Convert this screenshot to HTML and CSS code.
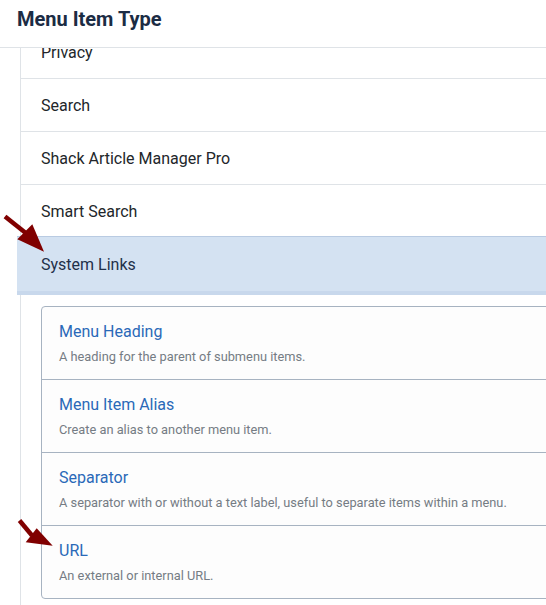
FILE: index.html
```html
<!DOCTYPE html>
<html lang="en">
<head>
<meta charset="utf-8">
<title>Menu Item Type</title>
<link rel="stylesheet" href="styles.css">
</head>
<body>
<div class="page">
  <header class="modal-header">
    <h3 class="modal-title">Menu Item Type</h3>
  </header>
  <div class="modal-body">
    <ul class="types">
      <li class="type first">Privacy</li>
      <li class="type">Search</li>
      <li class="type">Shack Article Manager Pro</li>
      <li class="type">Smart Search</li>
      <li class="type active">System Links</li>
      <li class="sub">
        <ul class="cards">
          <li class="card">
            <a class="card-title">Menu Heading</a>
            <p class="card-desc">A heading for the parent of submenu items.</p>
          </li>
          <li class="card">
            <a class="card-title">Menu Item Alias</a>
            <p class="card-desc">Create an alias to another menu item.</p>
          </li>
          <li class="card">
            <a class="card-title">Separator</a>
            <p class="card-desc">A separator with or without a text label, useful to separate items within a menu.</p>
          </li>
          <li class="card">
            <a class="card-title">URL</a>
            <p class="card-desc">An external or internal URL.</p>
          </li>
        </ul>
      </li>
    </ul>
  </div>
  <svg class="arrow" width="546" height="605" viewBox="0 0 546 605" aria-hidden="true">
    <line x1="5" y1="216.5" x2="27" y2="234" stroke="#800000" stroke-width="4.5" stroke-linecap="butt"/>
    <polygon points="17.3,239.3 32.3,224.3 44,251.7" fill="#800000"/>
    <line x1="19.5" y1="520.5" x2="32" y2="535.5" stroke="#800000" stroke-width="4.5" stroke-linecap="butt"/>
    <polygon points="25.7,542.3 36.7,528.3 52.7,545.7" fill="#800000"/>
  </svg>
</div>
</body>
</html>
```

FILE: styles.css
```css
html, body {
  margin: 0;
  padding: 0;
  background: #ffffff;
}

body {
  font-family: Roboto, "Noto Sans", "Liberation Sans", sans-serif;
  color: #22262a;
  overflow: hidden;
}

.page {
  position: relative;
  width: 546px;
  height: 605px;
  overflow: hidden;
  display: flex;
  flex-direction: column;
}

.modal-header {
  height: 47px;
  border-bottom: 1px solid #dfe3e7;
  display: flex;
  align-items: center;
  padding-left: 17px;
  flex: none;
  position: relative;
  z-index: 2;
  background: #fff;
}

.modal-title {
  margin: 0;
  font-size: 20px;
  font-weight: 700;
  color: #1b2c44;
  line-height: 24px;
  position: relative;
  top: -5px;
}

.modal-body {
  flex: 1;
  overflow: hidden;
}

.types {
  list-style: none;
  margin: -22px -20px 0 20px;
  padding: 0;
  border-left: 1px solid #dfe3e7;
  min-height: 700px;
}

.type {
  font-size: 16px;
  line-height: 20px;
  padding: 17px 20px 15px 20px;
  border-bottom: 1px solid #dfe3e7;
}

.type.active {
  margin: -2px 0 0 -4px;
  padding: 18px 24px 16px 24px;
  background: #d4e2f2;
  border-top: 1px solid #b9cbe2;
  border-bottom: 4px solid #c8d8ec;
  color: #1f3049;
}

.sub {
  padding: 11px 0 0 20px;
}

.cards {
  list-style: none;
  margin: 0;
  padding: 0;
  border: 1px solid #a7b3c1;
  border-radius: 4px;
  background: #fdfdfd;
}

.card {
  padding: 13px 17px 12px 17px;
  border-top: 1px solid #a7b3c1;
}

.card:first-child {
  border-top: none;
}

.card-title {
  display: block;
  font-size: 16px;
  line-height: 24px;
  color: #2a69b8;
}

.card-desc {
  margin: 3px 0 0 0;
  font-size: 12.8px;
  line-height: 20px;
  color: #757c84;
}

.arrow {
  position: absolute;
  left: 0;
  top: 0;
  z-index: 3;
  pointer-events: none;
}
```
